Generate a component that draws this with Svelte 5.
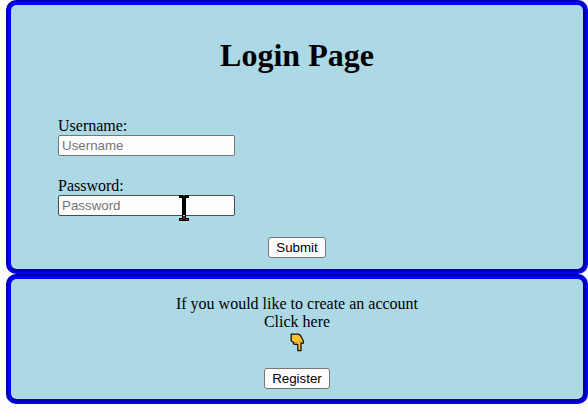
<script>
  let username = $state('');
  let password = $state('');
</script>

<main>
  <section class="panel login">
    <h1>Login Page</h1>
    <form onsubmit={(e) => e.preventDefault()}>
      <label for="username">Username:</label>
      <input id="username" type="text" placeholder="Username" bind:value={username} />
      <label class="second" for="password">Password:</label>
      <div class="field">
        <input id="password" class="hovered" type="password" placeholder="Password" bind:value={password} />
        <svg class="cursor" width="10" height="26" viewBox="0 0 10 26" shape-rendering="crispEdges" aria-hidden="true">
          <path d="M0 0h4v1h2v-1h4v3h-3v18h-4v-18h-3z" fill="#000" />
          <path d="M3 20h4v3h3v3h-10v-3h3z" fill="#000" />
          <path d="M4 20h2v1h-2z" fill="#c9c0bc" />
          <path d="M4 21h2v3h3v1h-3v-1h-2v1h-3v-1h3z" fill="#592316" />
        </svg>
      </div>
      <button type="submit">Submit</button>
    </form>
  </section>

  <section class="panel register">
    <p>If you would like to create an account<br />Click here</p>
    <svg class="hand" width="15" height="19" viewBox="0 0 15 19" aria-hidden="true">
      <path
        d="M1.2 1.2H8.8L10.6 2.8L13.4 8.2V10.2H11V17.6H7.8V11.4H4.6L3.4 10.4V9.2L1.2 8Z"
        fill="#ffc233" stroke="#17140b" stroke-width="1.3" stroke-linejoin="round" />
      <path d="M4 9.6H7.5M9 7.3L10.7 9.8" fill="none" stroke="#986b17" stroke-width=".7" />
    </svg>
    <button type="button">Register</button>
  </section>
</main>

<style>
  :global(body) {
    margin: 0;
    background: #fdfdfd;
    font-family: "Liberation Serif", "Times New Roman", serif;
    font-size: 16px;
    line-height: 18px;
    color: #000;
    overflow: hidden;
  }
  main {
    padding-left: 6px;
  }
  .panel {
    box-sizing: border-box;
    width: 582px;
    border: 5px groove blue;
    border-radius: 10px;
    background: lightblue;
    display: flex;
    flex-direction: column;
    align-items: center;
  }
  .login {
    height: 274px;
  }
  .register {
    height: 130px;
    padding-top: 16px;
  }
  h1 {
    margin: 32px 0 43px;
    font-size: 32px;
    line-height: 37px;
  }
  form {
    box-sizing: border-box;
    width: 100%;
    padding: 0 47px;
    display: flex;
    flex-direction: column;
    align-items: flex-start;
  }
  label {
    display: block;
  }
  .second {
    margin-top: 21px;
  }
  .field {
    position: relative;
    display: flex;
  }
  input {
    box-sizing: border-box;
    width: 177px;
    height: 21px;
    margin: 0;
    padding: 1px 3px;
    border: 1px solid #767676;
    border-radius: 2px;
    background: #fdfdfd;
    font: 13.333px "Liberation Sans", Arial, sans-serif;
  }
  input::placeholder {
    color: #757575;
  }
  .hovered {
    border-color: #4c4c4c;
  }
  .cursor {
    position: absolute;
    left: 121px;
    top: 0;
  }
  button {
    box-sizing: border-box;
    height: 21px;
    padding: 0;
    border: 1px solid #767676;
    border-radius: 3px;
    background: #fdfdfd;
    color: #000;
    font: 13.333px "Liberation Sans", Arial, sans-serif;
  }
  form button {
    width: 58px;
    margin-top: 21px;
    align-self: center;
  }
  .register button {
    width: 66px;
    margin-top: 16px;
  }
  p {
    margin: 0;
    text-align: center;
  }
  .hand {
    display: block;
    margin-top: 2px;
  }
</style>
